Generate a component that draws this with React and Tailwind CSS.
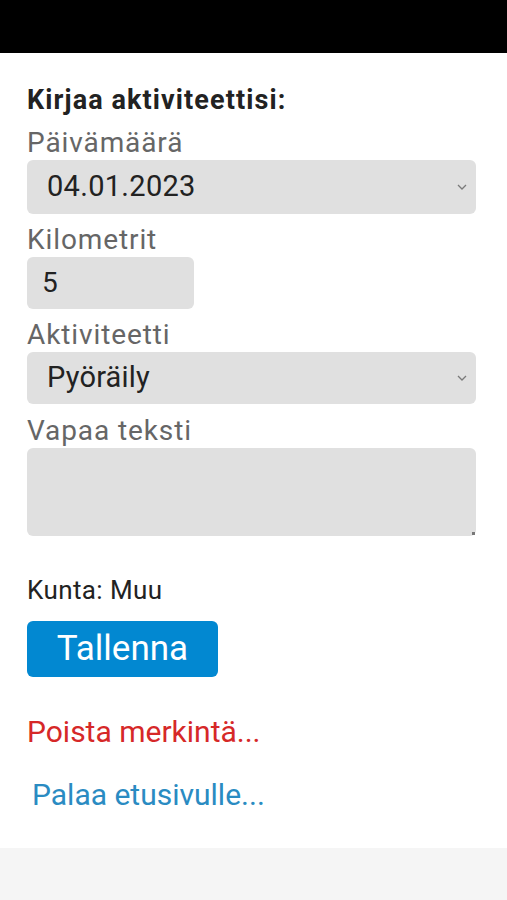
import React from "react";

function Chevron() {
  return (
    <svg width="10" height="6" viewBox="0 0 10 6" className="shrink-0">
      <path d="M1 1 L5 5 L9 1" fill="none" stroke="#7a7a7a" strokeWidth="1.3" />
    </svg>
  );
}

function Label({ children }) {
  return (
    <div className="text-[28px] leading-[34px] tracking-[0.9px] text-[#666666]">{children}</div>
  );
}

export default function App() {
  return (
    <div className="w-[507px] h-[900px] flex flex-col bg-white font-['Roboto','Liberation_Sans',sans-serif]">
      <div className="h-[53px] bg-black shrink-0" />
      <div className="flex-1 flex flex-col px-[27px] pr-[31px]">
        <div className="mt-[31px] text-[27px] leading-[32px] tracking-[1.1px] font-bold text-[#222222]">
          Kirjaa aktiviteettisi:
        </div>
        <div className="mt-[10px]">
          <Label>Päivämäärä</Label>
          <div className="h-[54px] rounded-[6px] bg-[#e0e0e0] flex items-center justify-between pl-[20px] pr-[9px]">
            <span className="text-[29px] tracking-[0.3px] text-[#222222]">04.01.2023</span>
            <Chevron />
          </div>
        </div>
        <div className="mt-[9px]">
          <Label>Kilometrit</Label>
          <div className="h-[52px] w-[167px] rounded-[6px] bg-[#e0e0e0] flex items-center pl-[15px]">
            <span className="text-[28px] text-[#222222]">5</span>
          </div>
        </div>
        <div className="mt-[9px]">
          <Label>Aktiviteetti</Label>
          <div className="h-[52px] rounded-[6px] bg-[#e0e0e0] flex items-center justify-between pl-[20px] pr-[9px]">
            <span className="text-[29px] tracking-[0.2px] text-[#222222]">Pyöräily</span>
            <Chevron />
          </div>
        </div>
        <div className="mt-[10px]">
          <Label>Vapaa teksti</Label>
          <div className="relative h-[88px] rounded-[6px] bg-[#e0e0e0]">
            <svg width="5" height="5" viewBox="0 0 5 5" className="absolute right-[1px] bottom-[1px]">
              <rect x="2" y="2" width="3" height="3" fill="#777" />
            </svg>
          </div>
        </div>
        <div className="mt-[38px] text-[26px] leading-[32px] tracking-[0.4px] text-[#222222]">Kunta: Muu</div>
        <div className="mt-[15px] w-[191px] h-[56px] rounded-[6px] bg-[#0288d1] flex items-center justify-center text-white text-[35px]">
          Tallenna
        </div>
        <div className="mt-[37px] text-[30px] leading-[36px] text-[#d62828]">Poista merkintä...</div>
        <div className="mt-[27px] pl-[5px] text-[30px] leading-[36px] text-[#2a8bc2]">Palaa etusivulle...</div>
      </div>
      <div className="h-[52px] bg-[#f5f5f5] shrink-0" />
    </div>
  );
}
